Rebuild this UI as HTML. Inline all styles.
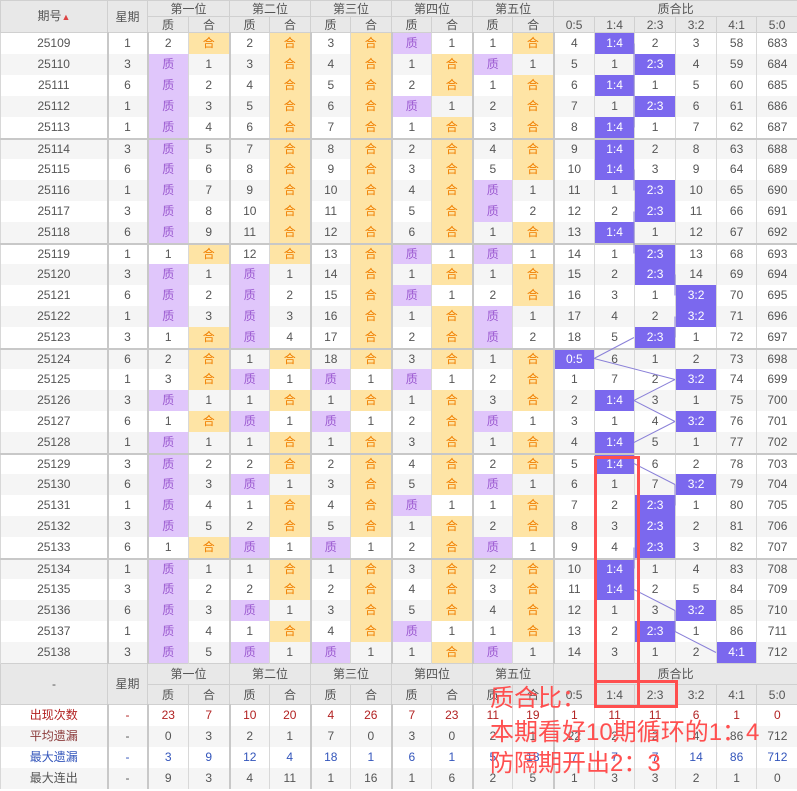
<!DOCTYPE html>
<html><head><meta charset="utf-8">
<style>
body{margin:0;width:797px;height:791px;overflow:hidden;background:#fff;font-family:"Liberation Sans","Noto Sans CJK SC",sans-serif;}
#wrap{position:relative;width:797px;height:791px;}
table{border-collapse:collapse;table-layout:fixed;width:797px;position:absolute;left:0;top:0;}
td,th{padding:0;text-align:center;font-size:12px;color:#555;font-weight:normal;border-left:1px solid #d8d8d8;overflow:hidden;white-space:nowrap;}
th{background:#e8e8e8;border:1px solid #d0d0d0;color:#555;line-height:14px;}
tr.d td{height:21px;line-height:21px;}
tr.g td{background:#f5f5f5;}
tr.w td{background:#fff;}
tr.sep td{border-top:2px solid #c8c8c8;height:19px;line-height:19px;}
td.gl{border-left:2px solid #c8c8c8;}
td.z{background:#e0c6fb!important;color:#9b59d0;}
td.h{background:#fee4a5!important;color:#f07f00;}
td.b{background:#7b68ee!important;color:#fff;}
svg{position:absolute;left:0;top:0;pointer-events:none;}
.red{position:absolute;color:#ff4f4f;font-size:24px;font-family:"Liberation Sans","Noto Sans CJK SC",sans-serif;white-space:nowrap;line-height:28px;}
</style></head><body><div id="wrap">
<table id="t"></table>
<svg id="s" width="797" height="791"></svg>
<div style="position:absolute;left:594px;top:456px;width:40px;height:246px;border:3px solid #ff4f4f;"></div>
<div style="position:absolute;left:594px;top:680px;width:78px;height:22px;border:3px solid #ff4f4f;"></div>
<div class="red" style="left:490px;top:685px;">质合比：</div>
<div class="red" style="left:490px;top:719px;">本期看好10期循环的1：4</div>
<div class="red" style="left:490px;top:750px;">防隔期开出2：3</div>
</div>
<script>
var W=[107,40,41,41,40,41,40,41,40,41,40,41,41,40,41,41,40,41];
var rows=[
"25109|1|2|H|2|H|3|H|Z|1|1|H|4|*1|2|3|58|683",
"25110|3|Z|1|3|H|4|H|1|H|Z|1|5|1|*2|4|59|684",
"25111|6|Z|2|4|H|5|H|2|H|1|H|6|*1|1|5|60|685",
"25112|1|Z|3|5|H|6|H|Z|1|2|H|7|1|*2|6|61|686",
"25113|1|Z|4|6|H|7|H|1|H|3|H|8|*1|1|7|62|687",
"25114|3|Z|5|7|H|8|H|2|H|4|H|9|*1|2|8|63|688",
"25115|6|Z|6|8|H|9|H|3|H|5|H|10|*1|3|9|64|689",
"25116|1|Z|7|9|H|10|H|4|H|Z|1|11|1|*2|10|65|690",
"25117|3|Z|8|10|H|11|H|5|H|Z|2|12|2|*2|11|66|691",
"25118|6|Z|9|11|H|12|H|6|H|1|H|13|*1|1|12|67|692",
"25119|1|1|H|12|H|13|H|Z|1|Z|1|14|1|*2|13|68|693",
"25120|3|Z|1|Z|1|14|H|1|H|1|H|15|2|*2|14|69|694",
"25121|6|Z|2|Z|2|15|H|Z|1|2|H|16|3|1|*3|70|695",
"25122|1|Z|3|Z|3|16|H|1|H|Z|1|17|4|2|*3|71|696",
"25123|3|1|H|Z|4|17|H|2|H|Z|2|18|5|*2|1|72|697",
"25124|6|2|H|1|H|18|H|3|H|1|H|*0|6|1|2|73|698",
"25125|1|3|H|Z|1|Z|1|Z|1|2|H|1|7|2|*3|74|699",
"25126|3|Z|1|1|H|1|H|1|H|3|H|2|*1|3|1|75|700",
"25127|6|1|H|Z|1|Z|1|2|H|Z|1|3|1|4|*3|76|701",
"25128|1|Z|1|1|H|1|H|3|H|1|H|4|*1|5|1|77|702",
"25129|3|Z|2|2|H|2|H|4|H|2|H|5|*1|6|2|78|703",
"25130|6|Z|3|Z|1|3|H|5|H|Z|1|6|1|7|*3|79|704",
"25131|1|Z|4|1|H|4|H|Z|1|1|H|7|2|*2|1|80|705",
"25132|3|Z|5|2|H|5|H|1|H|2|H|8|3|*2|2|81|706",
"25133|6|1|H|Z|1|Z|1|2|H|Z|1|9|4|*2|3|82|707",
"25134|1|Z|1|1|H|1|H|3|H|2|H|10|*1|1|4|83|708",
"25135|3|Z|2|2|H|2|H|4|H|3|H|11|*1|2|5|84|709",
"25136|6|Z|3|Z|1|3|H|5|H|4|H|12|1|3|*3|85|710",
"25137|1|Z|4|1|H|4|H|Z|1|1|H|13|2|*2|1|86|711",
"25138|3|Z|5|Z|1|Z|1|1|H|Z|1|14|3|1|2|*4|712"];
var lab=["0:5","1:4","2:3","3:2","4:1","5:0"];
var gl={1:1,2:1,4:1,6:1,8:1,10:1,12:1};
var h='<colgroup>'+W.map(function(w){return '<col style="width:'+w+'px">'}).join('')+'</colgroup>';
function head(first,top){
 var a=top?15:20,b=top?15:19;
 var s='<tr><th rowspan="2">'+first+'</th><th rowspan="2">星期</th>';
 ["第一位","第二位","第三位","第四位","第五位"].forEach(function(x){s+='<th colspan="2" style="height:'+a+'px">'+x+'</th>'});
 s+='<th colspan="6">质合比</th></tr><tr>';
 for(var i=0;i<5;i++)s+='<th style="height:'+b+'px">质</th><th>合</th>';
 lab.forEach(function(x){s+='<th>'+x+'</th>'});
 return s+'</tr>';
}
h+=head('期号<span style="color:#d44;font-size:9px">▲</span>',1);
var blue=[];
rows.forEach(function(r,i){
 var c=r.split('|');
 h+='<tr class="d '+(i%2?'g':'w')+(i%5==0&&i>0?' sep':'')+'">';
 c.forEach(function(v,j){
  var cls=gl[j]?'gl ':'';
  if(v=='Z'){cls+='z';v='质';}
  else if(v=='H'){cls+='h';v='合';}
  else if(v[0]=='*'){cls+='b';var k=+v.slice(1);blue.push(k);v=lab[k];}
  h+='<td class="'+cls+'">'+v+'</td>';
 });
 h+='</tr>';
});
h+=head('-',0);
var sm=[["出现次数","#b22222","-|23|7|10|20|4|26|7|23|11|19|1|11|11|6|1|0","#b22222"],
["平均遗漏","#8b3a3a","-|0|3|2|1|7|0|3|0|2|1|22|2|2|4|86|712","#555"],
["最大遗漏","#3355bb","-|3|9|12|4|18|1|6|1|5|18|7|7|7|14|86|712","#3355bb"],
["最大连出","#555","-|9|3|4|11|1|16|1|6|2|5|1|3|3|2|1|0","#555"]];
sm.forEach(function(s,i){
 h+='<tr class="d '+(i%2?'g':'w')+'"><td style="color:'+s[1]+'">'+s[0]+'</td>';
 s[2].split('|').forEach(function(v,j){h+='<td class="'+(gl[j+1]?'gl':'')+'" style="color:'+s[3]+'">'+v+'</td>'});
 h+='</tr>';
});
document.getElementById('t').innerHTML=h;
var L=[553,594,634,675,716,756,797];
var svg='';
for(var i=1;i<blue.length;i++){
 var a=blue[i-1],b=blue[i];if(a==b)continue;
 var ya=33+21*(i-1)+10.5,yb=33+21*i+10.5,xa,xb;
 if(b>a){xa=L[a+1];xb=L[b];}else{xa=L[a];xb=L[b+1];}
 svg+='<line x1="'+xa+'" y1="'+ya+'" x2="'+xb+'" y2="'+yb+'" stroke="#8a80d8" stroke-width="1"/>';
}
document.getElementById('s').innerHTML=svg;
</script>
</body></html>
